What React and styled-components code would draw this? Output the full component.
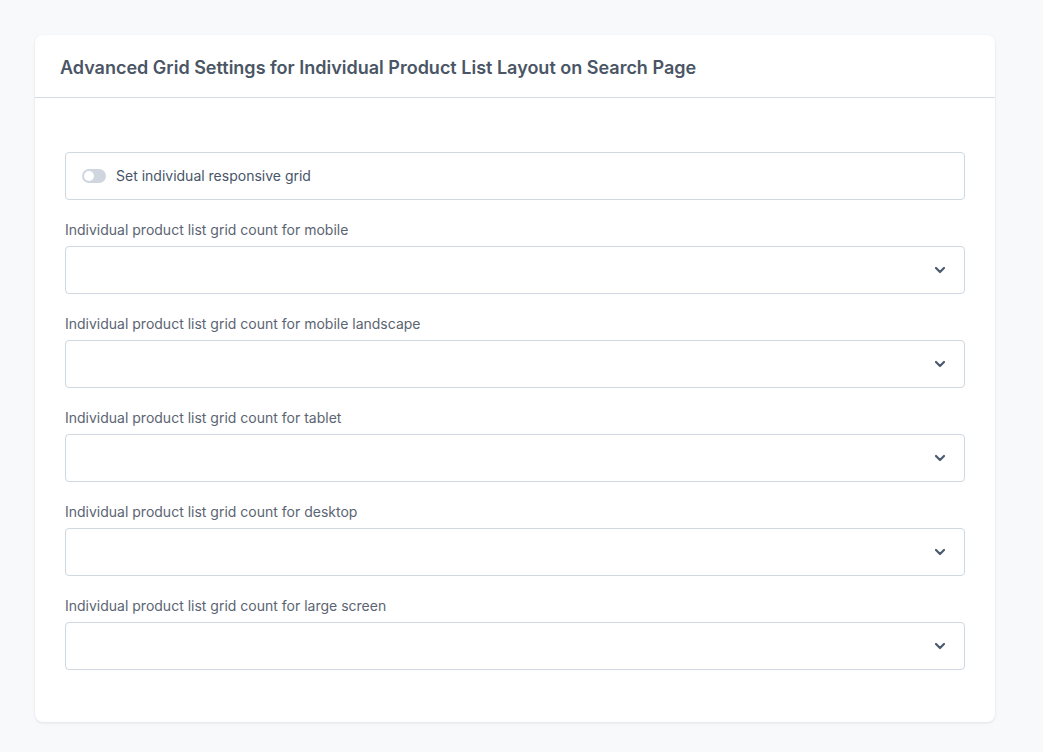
import React from "react";
import styled, { createGlobalStyle } from "styled-components";

const GlobalStyle = createGlobalStyle`
  body {
    margin: 0;
    background: #f8f9fb;
    font-family: Inter, "Noto Sans", sans-serif;
  }
`;

const Page = styled.div`
  padding: 35px 48px 30px 35px;
`;

const Card = styled.div`
  width: 960px;
  background: #ffffff;
  border-radius: 8px;
  box-shadow: 0 1px 3px rgba(15, 23, 42, 0.1);
`;

const Header = styled.div`
  height: 63px;
  box-sizing: border-box;
  display: flex;
  align-items: center;
  padding: 3px 25px 0;
  border-bottom: 1px solid #d5dbe3;
`;

const Title = styled.h2`
  margin: 0;
  font-size: 18px;
  font-weight: 600;
  color: #4a5565;
`;

const Body = styled.div`
  padding: 54px 30px 52px;
  display: flex;
  flex-direction: column;
  gap: 20px;
`;

const ToggleBox = styled.label`
  height: 48px;
  box-sizing: border-box;
  border: 1px solid #cfd7e1;
  border-radius: 4px;
  display: flex;
  align-items: center;
  padding: 0 16px 1px;
  gap: 10px;
  font-size: 14px;
  color: #475569;
`;

const Switch = styled.span`
  position: relative;
  width: 24px;
  height: 14px;
  border-radius: 7px;
  background: ${(p) => (p.on ? "#3b82f6" : "#cfd6df")};
  flex-shrink: 0;
  &::after {
    content: "";
    position: absolute;
    top: 2px;
    left: ${(p) => (p.on ? "12px" : "2px")};
    width: 10px;
    height: 10px;
    border-radius: 50%;
    background: #ffffff;
  }
`;

const Field = styled.div`
  display: flex;
  flex-direction: column;
`;

const Label = styled.div`
  font-size: 14px;
  line-height: 20px;
  color: #5b6472;
  margin-bottom: 6px;
`;

const Select = styled.div`
  height: 48px;
  box-sizing: border-box;
  border: 1px solid #cfd7e1;
  border-radius: 4px;
  display: flex;
  align-items: center;
  justify-content: flex-end;
  padding: 0 18px 0 0;
  color: #4b5a6e;
`;

const Chevron = () => (
  <svg width="12" height="8" viewBox="0 0 12 8" fill="none" stroke="currentColor" strokeWidth="2.2" strokeLinecap="round" strokeLinejoin="round">
    <path d="M2 2l4 4 4-4" />
  </svg>
);

const fields = [
  "Individual product list grid count for mobile",
  "Individual product list grid count for mobile landscape",
  "Individual product list grid count for tablet",
  "Individual product list grid count for desktop",
  "Individual product list grid count for large screen",
];

export default function App() {
  return (
    <>
      <GlobalStyle />
      <Page>
        <Card>
          <Header>
            <Title>Advanced Grid Settings for Individual Product List Layout on Search Page</Title>
          </Header>
          <Body>
            <ToggleBox>
              <Switch />
              Set individual responsive grid
            </ToggleBox>
            {fields.map((f) => (
              <Field key={f}>
                <Label>{f}</Label>
                <Select>
                  <Chevron />
                </Select>
              </Field>
            ))}
          </Body>
        </Card>
      </Page>
    </>
  );
}
